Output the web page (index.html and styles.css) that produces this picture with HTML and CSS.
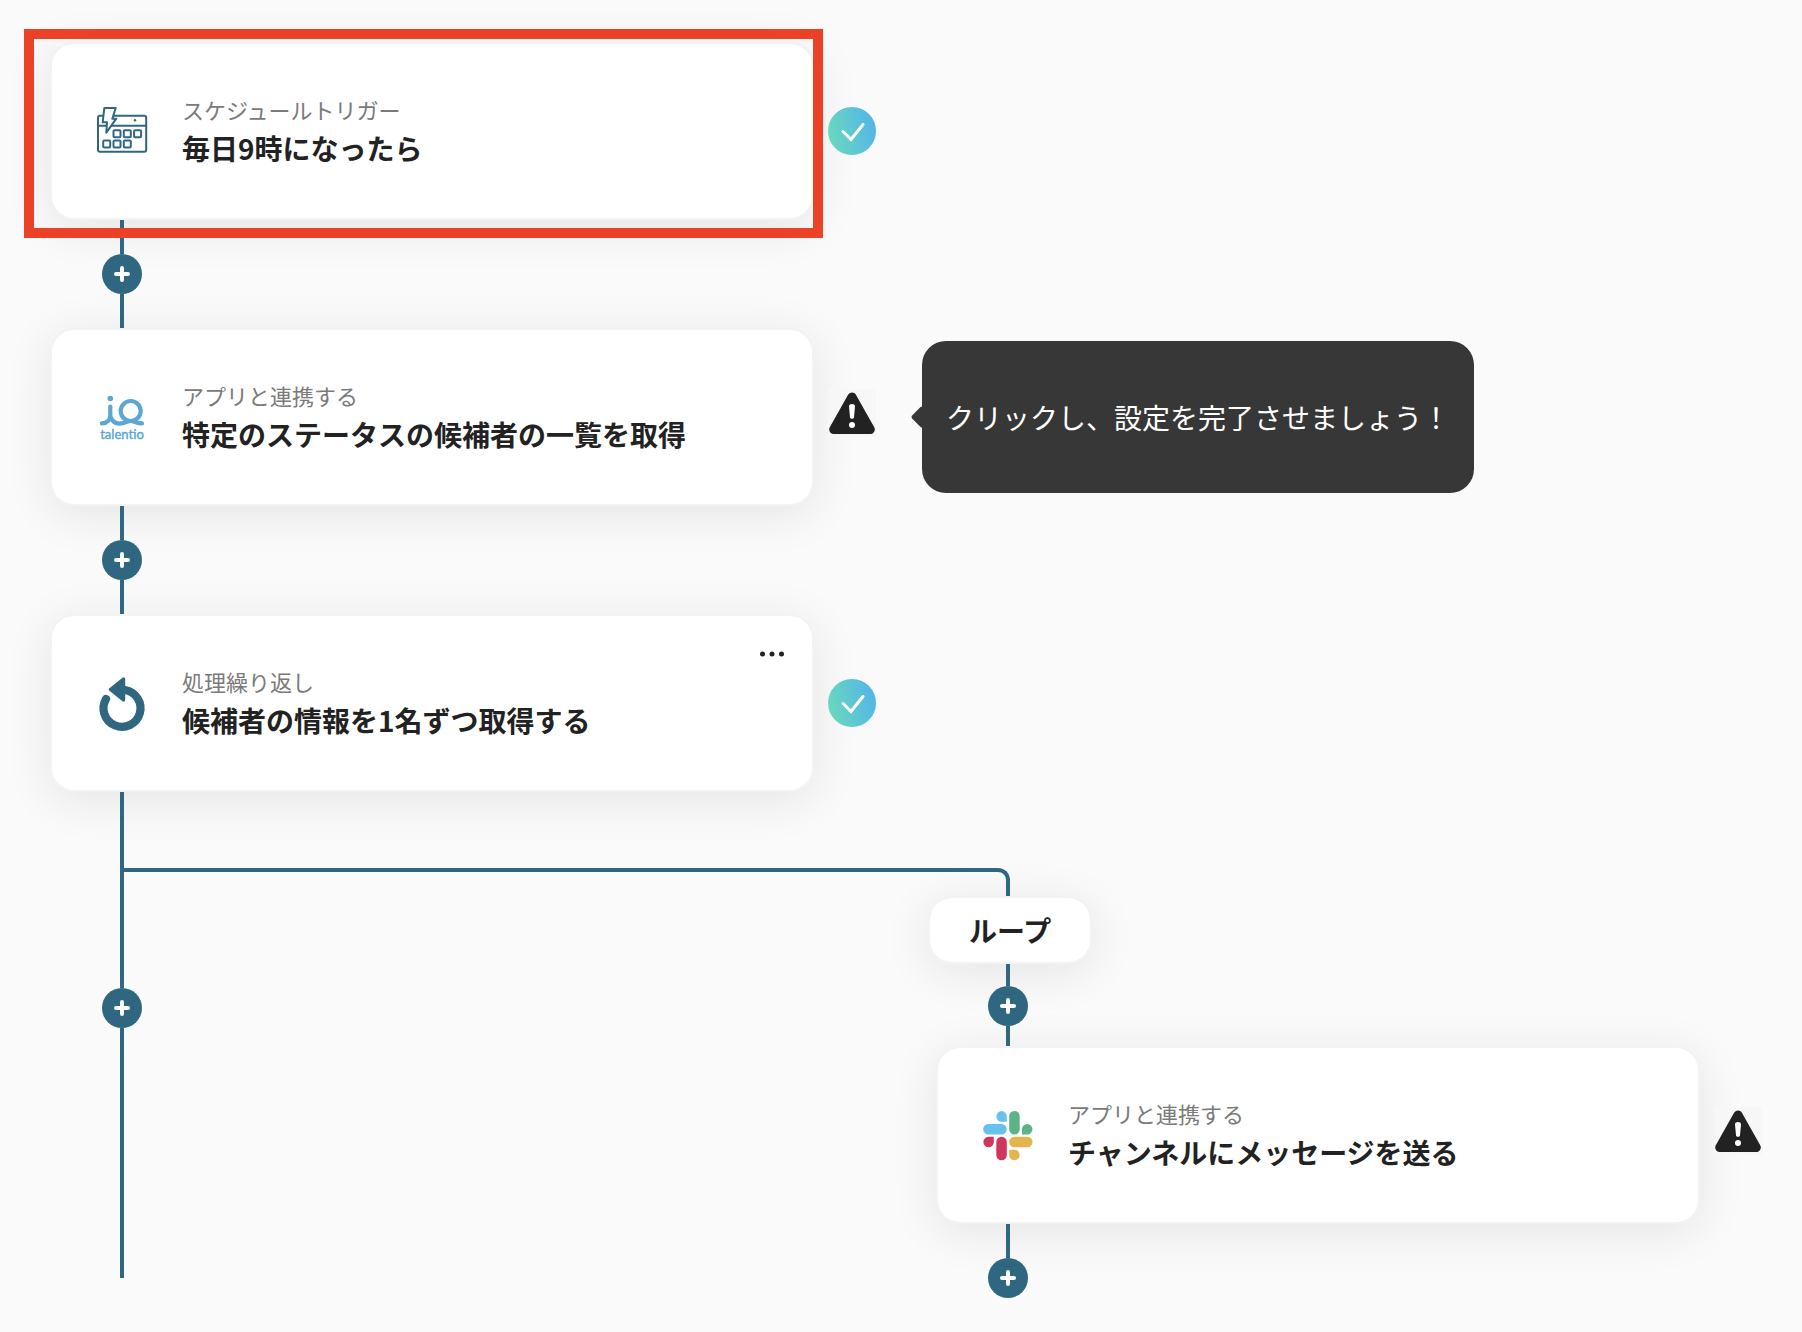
FILE: index.html
```html
<!DOCTYPE html>
<html lang="ja">
<head>
    <meta charset="UTF-8">
    <meta name="viewport" content="width=device-width, initial-scale=1.0">
    <title>ワークフロー</title>
    <link rel="stylesheet" href="styles.css">
</head>
<body>
    <svg class="defs" width="0" height="0" aria-hidden="true">
        <symbol id="plus" viewBox="0 0 16 16">
            <path d="M8 2v12M2 8h12" fill="none" stroke="#fff" stroke-width="4" stroke-linecap="round"/>
        </symbol>
        <symbol id="check" viewBox="0 0 48 48">
            <path d="M15 24.5l8 8 12-15" fill="none" stroke="#fff" stroke-width="3" stroke-linecap="round"/>
        </symbol>
        <symbol id="warning" viewBox="0 0 48 48">
            <path d="M24 8L42.3 40.5H5.7z" fill="#222" stroke="#222" stroke-width="9" stroke-linejoin="round"/>
            <path d="M21 17.4c0-3.2 6-3.2 6 0l-1 10.8c-.2 2-3.8 2-4 0z" fill="#fff"/>
            <circle cx="24" cy="36" r="3" fill="#fff"/>
        </symbol>
    </svg>

    <main class="flow">
        <div class="lane">
            <div class="step">
                <article class="card">
                    <svg class="card-icon" viewBox="0 0 52 52" fill="none" stroke="#2f6780" stroke-width="2" stroke-linejoin="round">
                        <rect x="2" y="10.7" width="48.2" height="36" rx="2"/>
                        <path d="M2 20.7h48.2"/>
                        <circle cx="39" cy="15.3" r="1.2" fill="#2f6780" stroke="none"/>
                        <rect x="17.5" y="25.2" width="7" height="7" rx="1"/>
                        <rect x="27.8" y="25.2" width="7" height="7" rx="1"/>
                        <rect x="38.1" y="25.2" width="7" height="7" rx="1"/>
                        <rect x="7.2" y="35.5" width="7" height="7" rx="1"/>
                        <rect x="17.5" y="35.5" width="7" height="7" rx="1"/>
                        <rect x="27.8" y="35.5" width="7" height="7" rx="1"/>
                        <path d="M8.3 3h11.4l-3.4 10.7h4l-10 14 .7-10.4H6.7z" fill="#fff"/>
                    </svg>
                    <div class="card-text">
                        <p class="card-kind">スケジュールトリガー</p>
                        <h2 class="card-title">毎日9時になったら</h2>
                    </div>
                    <div class="highlight"></div>
                </article>
                <span class="status status-ok"><svg><use href="#check"/></svg></span>
            </div>

            <div class="connector">
                <button class="add-button" aria-label="追加"><svg><use href="#plus"/></svg></button>
            </div>

            <div class="step">
                <article class="card">
                    <svg class="card-icon" viewBox="0 0 52 52" fill="none" stroke="#5aa7d4" stroke-width="4.2" stroke-linecap="round">
                        <circle cx="14.3" cy="7.5" r="2.8" fill="#5aa7d4" stroke="none"/>
                        <path d="M14.3 15.5V24c0 5-3 8-8.5 8.4"/>
                        <circle cx="34.7" cy="20" r="10"/>
                        <path d="M14.5 26c2 5.5 6 7 11 6.4 4-.5 6-2.4 9.2-2.4s6 2.4 11.3 2.4"/>
                        <text class="logo-text" x="26" y="48" text-anchor="middle">talentio</text>
                    </svg>
                    <div class="card-text">
                        <p class="card-kind">アプリと連携する</p>
                        <h2 class="card-title">特定のステータスの候補者の一覧を取得</h2>
                    </div>
                </article>
                <button class="status status-warning" aria-label="警告"><svg><use href="#warning"/></svg></button>
                <div class="tooltip" role="tooltip">クリックし、設定を完了させましょう！</div>
            </div>

            <div class="connector">
                <button class="add-button" aria-label="追加"><svg><use href="#plus"/></svg></button>
            </div>

            <div class="step">
                <article class="card">
                    <svg class="card-icon" viewBox="0 0 52 54">
                        <path d="M10 23A18.5 18.5 0 1 0 29 14" fill="none" stroke="#2f6780" stroke-width="8.2" stroke-linecap="round"/>
                        <path d="M27.5 3v21L14.5 13.5z" fill="#2f6780" stroke="#2f6780" stroke-width="3.4" stroke-linejoin="round"/>
                    </svg>
                    <div class="card-text">
                        <p class="card-kind">処理繰り返し</p>
                        <h2 class="card-title">候補者の情報を1名ずつ取得する</h2>
                    </div>
                    <button class="more-button" aria-label="メニュー">
                        <svg viewBox="0 0 24 6" fill="#222">
                            <circle cx="2.5" cy="3" r="2.5"/>
                            <circle cx="12" cy="3" r="2.5"/>
                            <circle cx="21.5" cy="3" r="2.5"/>
                        </svg>
                    </button>
                </article>
                <span class="status status-ok"><svg><use href="#check"/></svg></span>
            </div>
        </div>

        <div class="branch">
            <div class="stem">
                <button class="add-button" aria-label="追加"><svg><use href="#plus"/></svg></button>
            </div>
            <div class="elbow"></div>
            <div class="lane lane-loop">
                <div class="loop-label">ループ</div>
                <div class="connector connector-short">
                    <button class="add-button" aria-label="追加"><svg><use href="#plus"/></svg></button>
                </div>
                <div class="step">
                    <article class="card">
                        <svg class="card-icon" viewBox="0 0 52 52">
                            <g fill="#66c1ec">
                                <rect x="1.2" y="15" width="23.6" height="10.5" rx="5.2"/>
                                <path d="M24.8 12.7h-5.2a5.2 5.3 0 1 1 5.2-5.3z"/>
                            </g>
                            <g fill="#5cb386">
                                <rect x="27.2" y="2" width="10.5" height="23.5" rx="5.2"/>
                                <path d="M40 25.5v-5.2a5.2 5.2 0 1 1 5.2 5.2z"/>
                            </g>
                            <g fill="#d0365d">
                                <rect x="14.3" y="27.8" width="10.5" height="23.5" rx="5.2"/>
                                <path d="M11.8 27.8v5.2a5.2 5.2 0 1 1-5.2-5.2z"/>
                            </g>
                            <g fill="#e3b54d">
                                <rect x="27.2" y="27.8" width="23.4" height="10.5" rx="5.2"/>
                                <path d="M27.2 40.8h5.2a5.2 5.2 0 1 1-5.2 5.2z"/>
                            </g>
                        </svg>
                        <div class="card-text">
                            <p class="card-kind">アプリと連携する</p>
                            <h2 class="card-title">チャンネルにメッセージを送る</h2>
                        </div>
                    </article>
                    <button class="status status-warning" aria-label="警告"><svg><use href="#warning"/></svg></button>
                </div>
                <div class="connector connector-end">
                    <button class="add-button" aria-label="追加"><svg><use href="#plus"/></svg></button>
                </div>
            </div>
        </div>
    </main>
</body>
</html>
```

FILE: styles.css
```css
* {
    box-sizing: border-box;
}
body {
    margin: 0;
    background: #fafafa;
    color: #222;
    font-family: "Noto Sans CJK JP", sans-serif;
}
button {
    padding: 0;
    border: 0;
    background: none;
    cursor: pointer;
}
svg {
    display: block;
}
.defs {
    position: absolute;
}
.flow {
    padding: 42px 40px 34px 50px;
}
.flow > .lane {
    width: calc(50% - 30px);
}

/* step */
.step {
    position: relative;
    display: flex;
    align-items: center;
    gap: 14px;
}
.card {
    position: relative;
    flex: 1;
    display: flex;
    align-items: center;
    gap: 34px;
    min-height: 178px;
    padding: 0 28px 0 44px;
    background: #fff;
    background-clip: padding-box;
    border: 2px solid #f3f3f3;
    border-radius: 24px;
    box-shadow: 0 8px 48px rgba(0, 0, 0, 0.09);
}
.card-icon {
    flex: none;
    width: 52px;
    height: 54px;
    overflow: visible;
}
.logo-text {
    font-family: Lato, sans-serif;
    font-size: 13px;
    fill: #5aa7d4;
    stroke: #5aa7d4;
    stroke-width: 0.4px;
}
.card-text {
    flex: 1;
    padding-bottom: 2px;
}
.card-kind {
    margin: 0;
    color: #7a7a7a;
    font-size: 22px;
    line-height: 36px;
}
.card-title {
    margin: 0;
    font-size: 28px;
    font-weight: bold;
    line-height: 42px;
}
.more-button {
    align-self: flex-start;
    padding: 35px 0 20px;
}
.more-button svg {
    width: 24px;
    height: 6px;
}
.highlight {
    position: absolute;
    z-index: 2;
    top: -15px;
    right: -11px;
    bottom: -20px;
    left: -28px;
    border: 10px solid #ea4127;
    pointer-events: none;
}

/* status */
.status {
    flex: none;
    position: relative;
    width: 48px;
    height: 48px;
}
.status svg {
    width: 48px;
    height: 48px;
}
.status-ok {
    border-radius: 50%;
    background: linear-gradient(75deg, #6cdcb8, #52b1ee);
}
.status-warning {
    margin-bottom: 8px;
    background: #f7f7f7;
}
.tooltip {
    position: absolute;
    top: 50%;
    left: calc(100% + 46px);
    transform: translateY(-50%);
    padding: 55px 24px;
    border-radius: 24px;
    background: #373737;
    color: #fff;
    font-size: 28px;
    line-height: 42px;
    white-space: nowrap;
}
.tooltip::before {
    content: "";
    position: absolute;
    top: 50%;
    left: -8px;
    width: 16px;
    height: 16px;
    border-radius: 2px;
    background: #373737;
    transform: translateY(-50%) rotate(45deg);
}

/* lines between steps */
.connector,
.stem {
    position: relative;
    z-index: 1;
    display: flex;
    flex-direction: column;
    align-items: center;
    width: 40px;
    margin-left: 52px;
}
.connector::before,
.connector::after,
.stem::before,
.stem::after {
    content: "";
    width: 4px;
    height: 34px;
    background: #2f6780;
}
.connector-short::before {
    height: 22px;
}
.connector-short::after {
    height: 20px;
}
.connector-end::after {
    display: none;
}
.add-button {
    display: flex;
    align-items: center;
    justify-content: center;
    width: 40px;
    height: 40px;
    border-radius: 50%;
    background: #2f6780;
}
.add-button svg {
    width: 16px;
    height: 16px;
}

/* loop branch */
.branch {
    display: grid;
    grid-template-columns: 1fr 1fr;
    grid-template-rows: 104px auto;
    column-gap: 60px;
}
.stem {
    grid-area: 1 / 1 / 3 / 2;
    margin-bottom: 20px;
}
.stem::before {
    height: 196px;
}
.stem::after {
    flex: 1;
}
.elbow {
    position: relative;
    z-index: 1;
    grid-area: 1 / 1 / 2 / 3;
    width: calc(50% + 34px);
    margin: 76px 0 0 70px;
    border: solid #2f6780;
    border-width: 4px 4px 0 0;
    border-top-right-radius: 12px;
}
.lane-loop {
    grid-area: 2 / 2 / 3 / 3;
}
.loop-label {
    width: fit-content;
    margin-left: -8px;
    padding: 11px 39px;
    background: #fff;
    background-clip: padding-box;
    border: 2px solid #f3f3f3;
    border-radius: 24px;
    box-shadow: 0 8px 48px rgba(0, 0, 0, 0.09);
    font-size: 28px;
    font-weight: bold;
    line-height: 42px;
}
```
